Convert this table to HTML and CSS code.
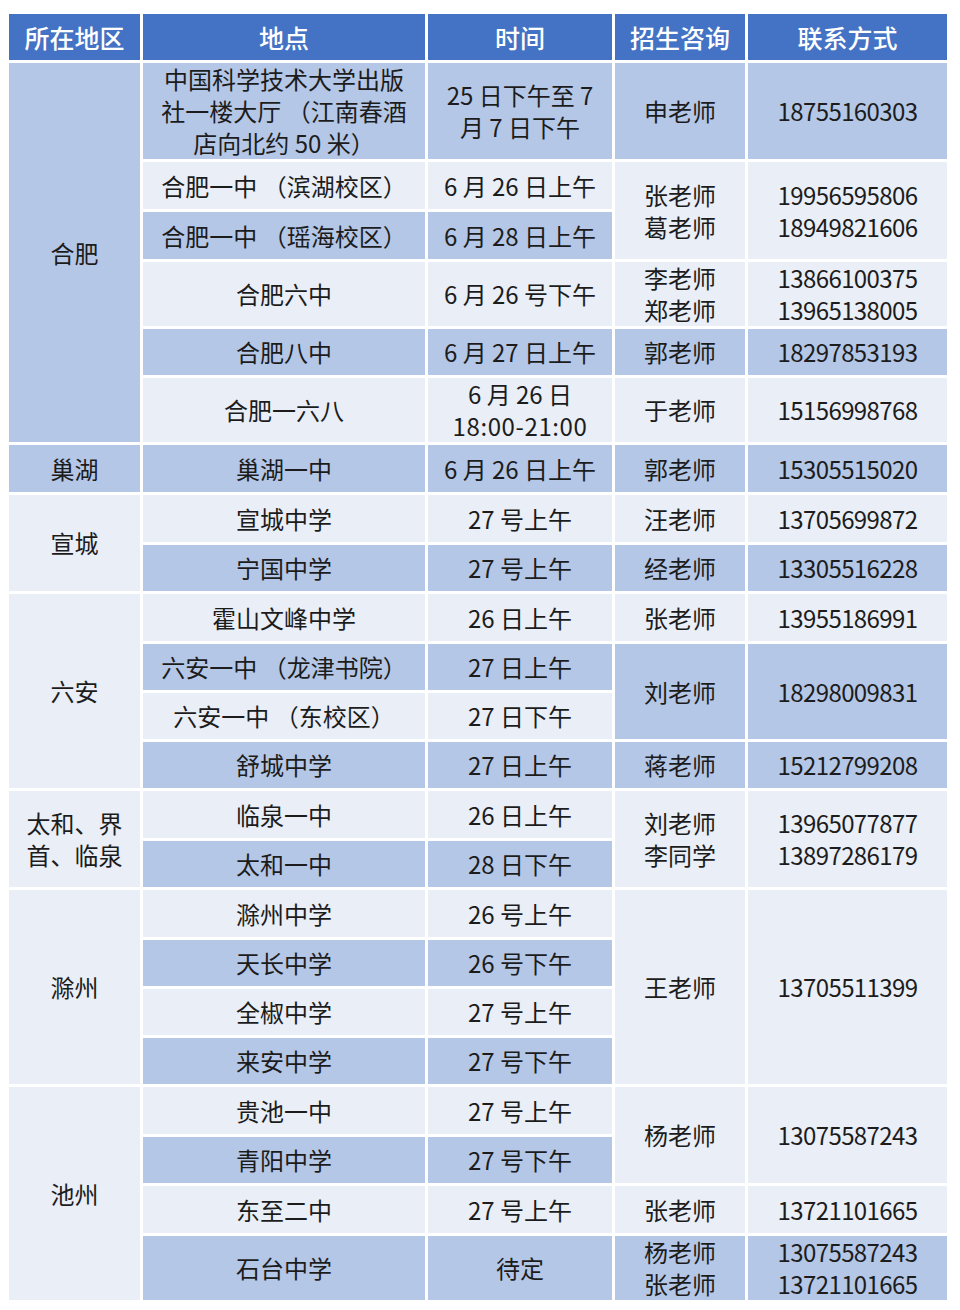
FILE: index.html
```html
<!DOCTYPE html>
<html lang="zh-CN">
<head>
<meta charset="utf-8">
<title>招生咨询</title>
<link rel="stylesheet" href="styles.css">
</head>
<body>
<div class="wrap">
<table class="grid">
  <colgroup>
    <col class="c1"><col class="c2"><col class="c3"><col class="c4"><col class="c5">
  </colgroup>
  <thead>
    <tr class="h46">
      <th>所在地区</th><th>地点</th><th>时间</th><th>招生咨询</th><th>联系方式</th>
    </tr>
  </thead>
  <tbody>
    <tr class="h96">
      <td rowspan="6" class="d">合肥</td>
      <td class="d">中国科学技术大学出版<br>社一楼大厅 （江南春酒<br>店向北约 50 米）</td>
      <td class="d">25 日下午至 7<br>月 7 日下午</td>
      <td class="d">申老师</td>
      <td class="d num">18755160303</td>
    </tr>
    <tr class="h47">
      <td class="l">合肥一中 （滨湖校区）</td>
      <td class="l">6 月 26 日上午</td>
      <td rowspan="2" class="l">张老师<br>葛老师</td>
      <td rowspan="2" class="l num">19956595806<br>18949821606</td>
    </tr>
    <tr class="h47">
      <td class="d">合肥一中 （瑶海校区）</td>
      <td class="d">6 月 28 日上午</td>
    </tr>
    <tr class="h63">
      <td class="l">合肥六中</td>
      <td class="l">6 月 26 号下午</td>
      <td class="l">李老师<br>郑老师</td>
      <td class="l num">13866100375<br>13965138005</td>
    </tr>
    <tr class="h46">
      <td class="d">合肥八中</td>
      <td class="d">6 月 27 日上午</td>
      <td class="d">郭老师</td>
      <td class="d num">18297853193</td>
    </tr>
    <tr class="h64">
      <td class="l">合肥一六八</td>
      <td class="l">6 月 26 日<br><span class="clock">18:00-21:00</span></td>
      <td class="l">于老师</td>
      <td class="l num">15156998768</td>
    </tr>
    <tr class="h47">
      <td class="d">巢湖</td>
      <td class="d">巢湖一中</td>
      <td class="d">6 月 26 日上午</td>
      <td class="d">郭老师</td>
      <td class="d num">15305515020</td>
    </tr>
    <tr class="h47">
      <td rowspan="2" class="l">宣城</td>
      <td class="l">宣城中学</td>
      <td class="l">27 号上午</td>
      <td class="l">汪老师</td>
      <td class="l num">13705699872</td>
    </tr>
    <tr class="h46">
      <td class="d">宁国中学</td>
      <td class="d">27 号上午</td>
      <td class="d">经老师</td>
      <td class="d num">13305516228</td>
    </tr>
    <tr class="h47">
      <td rowspan="4" class="l">六安</td>
      <td class="l">霍山文峰中学</td>
      <td class="l">26 日上午</td>
      <td class="l">张老师</td>
      <td class="l num">13955186991</td>
    </tr>
    <tr class="h46">
      <td class="d">六安一中 （龙津书院）</td>
      <td class="d">27 日上午</td>
      <td rowspan="2" class="d">刘老师</td>
      <td rowspan="2" class="d num">18298009831</td>
    </tr>
    <tr class="h46">
      <td class="l">六安一中 （东校区）</td>
      <td class="l">27 日下午</td>
    </tr>
    <tr class="h46">
      <td class="d">舒城中学</td>
      <td class="d">27 日上午</td>
      <td class="d">蒋老师</td>
      <td class="d num">15212799208</td>
    </tr>
    <tr class="h47">
      <td rowspan="2" class="l">太和、界<br>首、临泉</td>
      <td class="l">临泉一中</td>
      <td class="l">26 日上午</td>
      <td rowspan="2" class="l">刘老师<br>李同学</td>
      <td rowspan="2" class="l num">13965077877<br>13897286179</td>
    </tr>
    <tr class="h46">
      <td class="d">太和一中</td>
      <td class="d">28 日下午</td>
    </tr>
    <tr class="h47">
      <td rowspan="4" class="l">滁州</td>
      <td class="l">滁州中学</td>
      <td class="l">26 号上午</td>
      <td rowspan="4" class="l">王老师</td>
      <td rowspan="4" class="l num">13705511399</td>
    </tr>
    <tr class="h46">
      <td class="d">天长中学</td>
      <td class="d">26 号下午</td>
    </tr>
    <tr class="h46">
      <td class="l">全椒中学</td>
      <td class="l">27 号上午</td>
    </tr>
    <tr class="h46">
      <td class="d">来安中学</td>
      <td class="d">27 号下午</td>
    </tr>
    <tr class="h47">
      <td rowspan="4" class="l">池州</td>
      <td class="l">贵池一中</td>
      <td class="l">27 号上午</td>
      <td rowspan="2" class="l">杨老师</td>
      <td rowspan="2" class="l num">13075587243</td>
    </tr>
    <tr class="h46">
      <td class="d">青阳中学</td>
      <td class="d">27 号下午</td>
    </tr>
    <tr class="h47">
      <td class="l">东至二中</td>
      <td class="l">27 号上午</td>
      <td class="l">张老师</td>
      <td class="l num">13721101665</td>
    </tr>
    <tr class="h64">
      <td class="d">石台中学</td>
      <td class="d">待定</td>
      <td class="d">杨老师<br>张老师</td>
      <td class="d num">13075587243<br>13721101665</td>
    </tr>
  </tbody>
</table>
</div>
</body>
</html>
```

FILE: styles.css
```css
html, body {
  margin: 0;
  padding: 0;
  background: #ffffff;
}

.wrap {
  padding: 11px 0 0 6px;
}

.grid {
  border-collapse: separate;
  border-spacing: 3px;
  table-layout: fixed;
  width: 944px;
  font-family: "Noto Sans CJK SC", "Noto Sans", sans-serif;
  font-size: 24px;
  line-height: 32px;
  color: #1c1c1c;
}

.c1 { width: 131px; }
.c2 { width: 282px; }
.c3 { width: 184px; }
.c4 { width: 130px; }
.c5 { width: 199px; }

.grid th,
.grid td {
  padding: 0;
  text-align: center;
  vertical-align: middle;
  box-sizing: border-box;
}

.grid th {
  background: #4472c4;
  color: #ffffff;
  font-weight: 500;
  font-size: 25px;
}

.grid td.d { background: #b4c7e7; }
.grid td.l { background: #e9eef7; }

.num { letter-spacing: -0.6px; }

.clock { letter-spacing: 0.6px; }

.h46 { height: 46px; }
.h47 { height: 47px; }
.h63 { height: 63px; }
.h64 { height: 64px; }
.h65 { height: 65px; }
.h96 { height: 96px; }
```
